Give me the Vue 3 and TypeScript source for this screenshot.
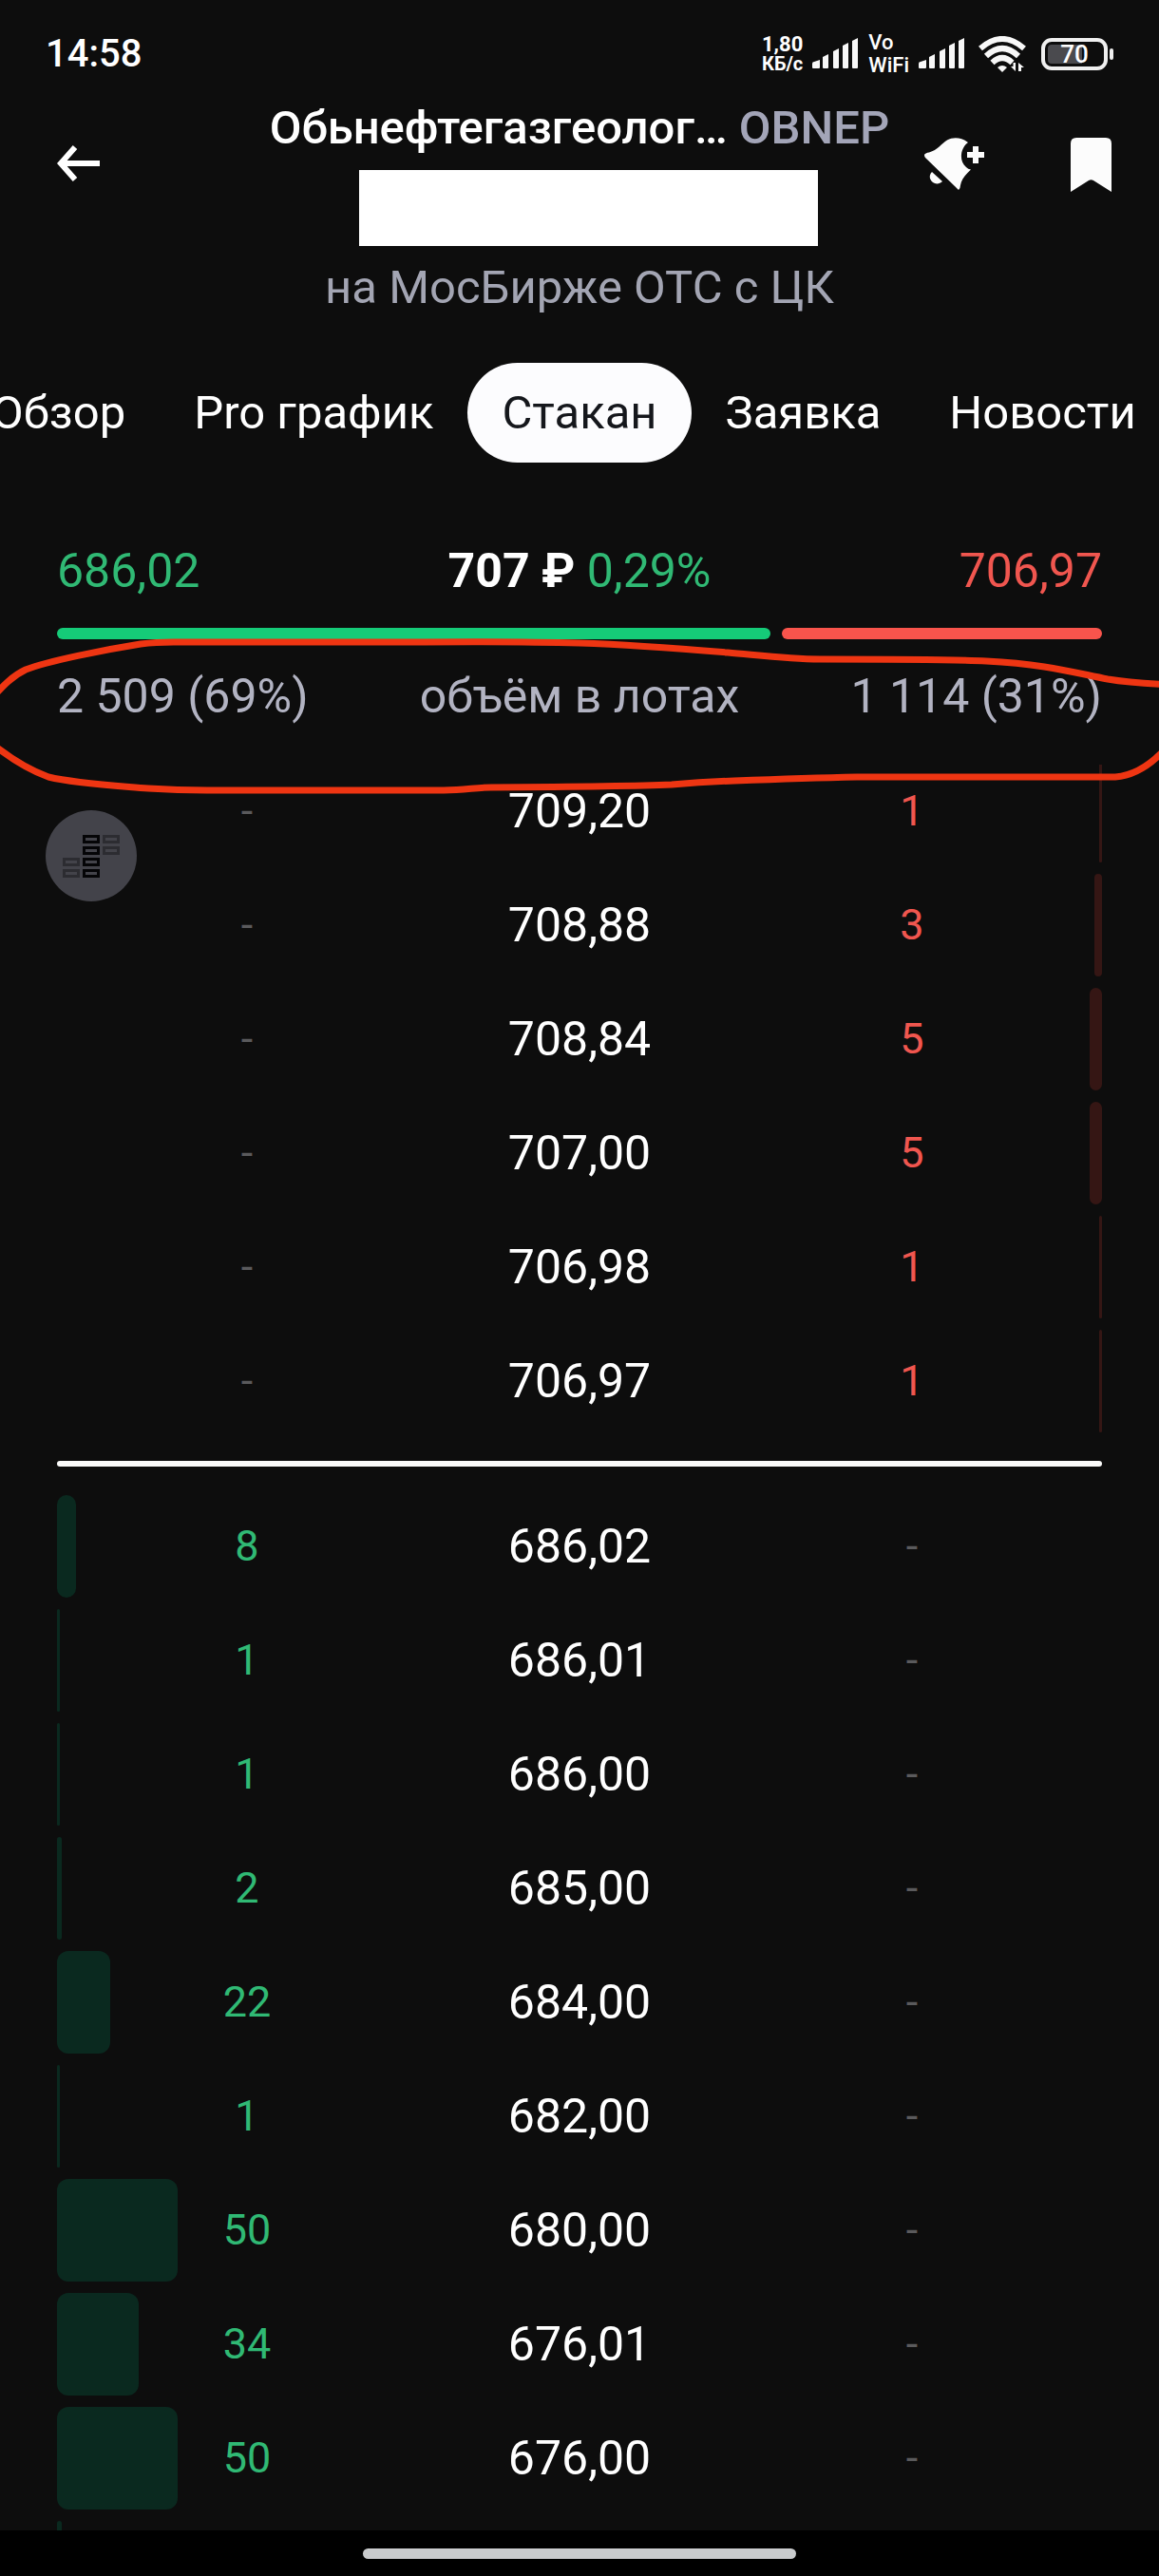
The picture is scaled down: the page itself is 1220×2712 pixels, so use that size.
<script setup lang="ts">
interface Level {
  price: string
  lots: number
}

const tabsBefore = ['Обзор', 'Pro график']
const tabsAfter = ['Заявка', 'Новости']

const asks: Level[] = [
  { price: '709,20', lots: 1 },
  { price: '708,88', lots: 3 },
  { price: '708,84', lots: 5 },
  { price: '707,00', lots: 5 },
  { price: '706,98', lots: 1 },
  { price: '706,97', lots: 1 },
]

const bids: Level[] = [
  { price: '686,02', lots: 8 },
  { price: '686,01', lots: 1 },
  { price: '686,00', lots: 1 },
  { price: '685,00', lots: 2 },
  { price: '684,00', lots: 22 },
  { price: '682,00', lots: 1 },
  { price: '680,00', lots: 50 },
  { price: '676,01', lots: 34 },
  { price: '676,00', lots: 50 },
]

const barWidth = (lots: number): string => `${Math.round(lots * 2.54)}px`
</script>

<template>
  <div class="screen">
    <div class="status">
      <span class="clock">14:58</span>
      <div class="status-icons">
        <div class="stack speed"><span class="speed-value">1,80</span><span class="speed-unit">КБ/с</span></div>
        <svg class="signal" width="49" height="33" viewBox="0 0 49 33" fill="#f8f8f8">
          <path d="M0 27q0-2 2-2l6-2v8q0 1-1 1H1q-1 0-1-1z" />
          <path d="M11 20l6-3v14q0 1-1 1h-4q-1 0-1-1z" />
          <path d="M22 14l6-3v20q0 1-1 1h-4q-1 0-1-1z" />
          <path d="M32 8l6-3v26q0 1-1 1h-4q-1 0-1-1z" />
          <path d="M42 3l6-3v31q0 1-1 1h-4q-1 0-1-1z" />
        </svg>
        <div class="stack vowifi"><span>Vo</span><span>WiFi</span></div>
        <svg class="signal" width="49" height="33" viewBox="0 0 49 33" fill="#f8f8f8">
          <path d="M0 27q0-2 2-2l6-2v8q0 1-1 1H1q-1 0-1-1z" />
          <path d="M11 20l6-3v14q0 1-1 1h-4q-1 0-1-1z" />
          <path d="M22 14l6-3v20q0 1-1 1h-4q-1 0-1-1z" />
          <path d="M32 8l6-3v26q0 1-1 1h-4q-1 0-1-1z" />
          <path d="M42 3l6-3v31q0 1-1 1h-4q-1 0-1-1z" />
        </svg>
        <svg class="wifi" width="50" height="38" viewBox="0 0 50 38">
          <g fill="none" stroke="#f8f8f8" stroke-width="6">
            <path d="M2 13Q25-7 48 13" />
            <path d="M8 21Q25 5 42 21" />
            <path d="M14.500 28Q25 18 35.500 28" />
          </g>
          <path d="M20 33q5-4 10 0l-5 5z" fill="#f8f8f8" />
          <path d="M39 28v9l-5-5h2.500v-4zM42 37v-9l6 5h-3v4z" fill="#f8f8f8" />
        </svg>
        <div class="battery">
          <div class="battery-body"><span class="battery-text">70</span></div>
          <div class="battery-tip"></div>
        </div>
      </div>
    </div>

    <header class="header">
      <button class="icon-button back" type="button" aria-label="Назад">
        <svg width="46" height="38" viewBox="0 0 46 38" fill="none" stroke="#fff" stroke-width="6">
          <path d="M45 19H5M19 2L4 19l15 17" />
        </svg>
      </button>
      <div class="heading">
        <h1 class="title">Обьнефтегазгеолог… <span class="ticker">OBNEP</span></h1>
        <div class="cover"></div>
        <p class="subtitle">на МосБирже ОТС с ЦК</p>
      </div>
      <div class="actions">
        <button class="icon-button" type="button" aria-label="Уведомление">
          <svg width="64" height="56" viewBox="0 0 64 56" fill="#fcfcfc">
            <path d="M0 18Q1 16 5 15.500C14 13 18 6 24 2.500C31-1.500 40 0 46 5C38 11 36 24 44 31Q46 33 49 33.500C43 39 39 44 38 50Q38 53 36 55Q34 53 32 51L1 21Q0 20 0 18z" />
            <path d="M8 36L19 46C15 50 8 49 6 43Q5 39 8 36z" />
            <path d="M51 9h6v6h6v6h-6v6h-6v-6h-6v-6h6z" />
          </svg>
        </button>
        <button class="icon-button" type="button" aria-label="Избранное">
          <svg width="43" height="58" viewBox="0 0 43 58" fill="#fcfcfc">
            <path d="M6 0h31q6 0 6 6v51L24 45q-2.500-1.500-5 0L0 57V6q0-6 6-6z" />
          </svg>
        </button>
      </div>
    </header>

    <nav class="tabs">
      <div class="tab-side before">
        <button v-for="tab in tabsBefore" :key="tab" class="tab" type="button">{{ tab }}</button>
      </div>
      <button class="tab active" type="button" aria-current="page">Стакан</button>
      <div class="tab-side">
        <button v-for="tab in tabsAfter" :key="tab" class="tab" type="button">{{ tab }}</button>
      </div>
    </nav>

    <section class="summary">
      <div class="triple">
        <span class="green">686,02</span>
        <span class="last"><b>707 ₽</b> <span class="green">0,29%</span></span>
        <span class="red">706,97</span>
      </div>
      <div class="ratio">
        <div class="ratio-bid"></div>
        <div class="ratio-ask"></div>
      </div>
      <div class="triple muted">
        <span>2 509 (69%)</span>
        <span>объём в лотах</span>
        <span>1 114 (31%)</span>
      </div>
      <svg class="marker" viewBox="0 0 1220 190" preserveAspectRatio="none" fill="none" stroke="#ee3512" stroke-width="7">
        <path d="M-12 78C0 65 10 52 27 44C50 35 110 23 148 17Q164 15 183 15H428Q540 14 610 16C670 18 730 23 766 26C800 29 830 33 863 33Q1000 33 1038 35C1100 38 1130 47 1166 54Q1190 58 1232 60" />
        <path d="M-12 119C5 133 26 148 51 157C80 164 120 166 156 169Q187 171 218 171H467C490 171 500 168 517 168Q660 167 707 165Q740 162 773 161Q850 158 902 157H1174Q1202 155 1228 126" />
      </svg>
      <button class="scroll-button" type="button" aria-label="К центру стакана">
        <svg width="60" height="45" viewBox="0 0 60 45" fill="none" stroke-width="3">
          <g stroke="#050507">
            <path d="M22.500 1.500h15v6h-15zM22.500 13.500h15v6h-15zM22.500 25.500h15v6h-15zM22.500 37.500h15v6h-15z" />
          </g>
          <g stroke="#2c2c31">
            <path d="M43.500 1.500h15v6h-15zM43.500 13.500h15v6h-15zM1.500 25.500h15v6h-15zM1.500 37.500h15v6h-15z" />
          </g>
        </svg>
      </button>
    </section>

    <main class="book">
      <table class="levels">
        <tbody>
          <tr v-for="level in asks" :key="level.price">
            <td class="side"><div class="cell"><span class="none">-</span></div></td>
            <td class="price">{{ level.price }}</td>
            <td class="side">
              <div class="cell">
                <span class="bar ask" :style="{ width: barWidth(level.lots) }"></span>
                <span class="lots red">{{ level.lots }}</span>
              </div>
            </td>
          </tr>
        </tbody>
        <tbody>
          <tr class="divider-row">
            <td colspan="3"><div class="divider"></div></td>
          </tr>
        </tbody>
        <tbody>
          <tr v-for="level in bids" :key="level.price">
            <td class="side">
              <div class="cell">
                <span class="bar bid" :style="{ width: barWidth(level.lots) }"></span>
                <span class="lots green">{{ level.lots }}</span>
              </div>
            </td>
            <td class="price">{{ level.price }}</td>
            <td class="side"><div class="cell"><span class="none">-</span></div></td>
          </tr>
          <tr>
            <td class="side" colspan="3">
              <div class="cell"><span class="bar bid" :style="{ width: barWidth(2) }"></span></div>
            </td>
          </tr>
        </tbody>
      </table>
    </main>

    <div class="home"><div class="home-pill"></div></div>
  </div>
</template>

<style>
body {
  background: #0d0d0d;
}
</style>

<style scoped>
.screen {
  display: flex;
  flex-direction: column;
  height: 100vh;
  overflow: hidden;
  background: #0d0d0d;
  color: #fff;
  font-family: Roboto, "Noto Sans", sans-serif;
  font-size: 49px;
  line-height: 56px;
}

button {
  padding: 0;
  border: 0;
  background: none;
  color: inherit;
  font: inherit;
}

svg {
  display: block;
}

.status {
  display: flex;
  flex: none;
  align-items: center;
  justify-content: space-between;
  height: 107px;
  padding: 6px 48px 0;
  box-sizing: border-box;
}

.clock {
  font-size: 40px;
  font-weight: 500;
}

.status-icons {
  display: flex;
  align-items: center;
  gap: 10px;
}

.stack {
  display: flex;
  flex-direction: column;
  font-weight: 500;
}

.speed {
  font-weight: 700;
  line-height: 20px;
}

.speed-value {
  font-size: 22px;
}

.speed-unit {
  font-size: 20px;
}

.vowifi {
  font-size: 22px;
  line-height: 24px;
}

.wifi {
  margin: 0 6px 0 4px;
}

.battery {
  display: flex;
  align-items: center;
  gap: 2px;
}

.battery-body {
  display: flex;
  align-items: center;
  justify-content: center;
  width: 70px;
  height: 34px;
  box-sizing: border-box;
  border: 4px solid #f0f0f0;
  border-radius: 11px;
  background: linear-gradient(90deg, #4a4a4e 65%, transparent 65%) content-box;
  padding: 3px;
}

.battery-text {
  font-size: 26px;
  font-weight: 500;
  line-height: 26px;
}

.battery-tip {
  width: 4px;
  height: 12px;
  border-radius: 2px;
  background: #f0f0f0;
}

.header {
  display: grid;
  flex: none;
  grid-template-columns: 1fr auto 1fr;
  align-items: start;
}

.icon-button {
  display: flex;
  align-items: flex-start;
}

.back {
  margin: 46px 0 0 60px;
}

.heading {
  display: flex;
  flex-direction: column;
  align-items: center;
  gap: 16px;
}

.title {
  margin: 0;
  font-size: 49px;
  font-weight: 500;
  white-space: nowrap;
}

.ticker {
  color: #a3a5b8;
}

.cover {
  width: 483px;
  height: 80px;
  margin-left: 20px;
  background: #fff;
}

.subtitle {
  margin: 0;
  color: #a3a5b3;
}

.actions {
  display: flex;
  justify-content: flex-end;
  gap: 90px;
  margin: 38px 50px 0 0;
}

.tabs {
  display: grid;
  flex: none;
  grid-template-columns: 1fr auto 1fr;
  margin-top: 51px;
  overflow: hidden;
}

.tab-side {
  display: flex;
  min-width: 0;
}

.before {
  justify-content: flex-end;
}

.tab {
  flex: none;
  height: 105px;
  padding: 0 36px;
  border-radius: 53px;
  white-space: nowrap;
}

.active {
  background: #fcfcfe;
  color: #15171c;
}

.summary {
  position: relative;
  flex: none;
  padding: 0 60px;
  margin-top: 86px;
  font-size: 50px;
}

.triple {
  display: grid;
  grid-template-columns: 1fr auto 1fr;
  white-space: nowrap;
}

.triple > :last-child {
  text-align: right;
}

.last b {
  font-weight: 700;
}

.ratio {
  display: flex;
  gap: 12px;
  margin: 32px 0;
}

.ratio-bid,
.ratio-ask {
  height: 12px;
  border-radius: 6px;
}

.ratio-bid {
  flex: 69;
  background: #15cb78;
}

.ratio-ask {
  flex: 31;
  background: #f9544c;
}

.muted {
  color: #b2b3c2;
}

.green {
  color: #30b974;
}

.red {
  color: #f0564f;
}

.marker {
  position: absolute;
  z-index: 3;
  top: 88px;
  left: 0;
  width: 100%;
  height: 190px;
  pointer-events: none;
}

.scroll-button {
  position: absolute;
  z-index: 2;
  top: 280px;
  left: 48px;
  display: flex;
  align-items: center;
  justify-content: center;
  width: 96px;
  height: 96px;
  border-radius: 50%;
  background: #43434a;
}

.book {
  flex: 1;
  min-height: 0;
  padding: 0 60px;
  margin-top: 44px;
  overflow: hidden;
}

.levels {
  width: 100%;
  margin-top: -11px;
  border-spacing: 0;
  table-layout: fixed;
  text-align: center;
}

td {
  padding: 0;
}

.price {
  width: 300px;
  font-size: 50px;
}

.cell {
  display: grid;
  align-items: center;
  height: 120px;
  font-size: 45px;
}

.cell > span {
  grid-area: 1 / 1;
}

.none {
  color: #5a5a5c;
}

.bar {
  height: 108px;
  border-radius: 12px;
}

.ask {
  justify-self: end;
  background: #351614;
}

.bid {
  justify-self: start;
  background: #0a291f;
}

.divider-row td {
  padding: 24px 0;
}

.divider {
  height: 6px;
  border-radius: 3px;
  background: #fafaf9;
}

.home {
  display: flex;
  flex: none;
  justify-content: center;
  height: 48px;
  padding-top: 19px;
  box-sizing: border-box;
  background: #000;
}

.home-pill {
  width: 456px;
  height: 11px;
  border-radius: 6px;
  background: #c9cbcd;
}
</style>
